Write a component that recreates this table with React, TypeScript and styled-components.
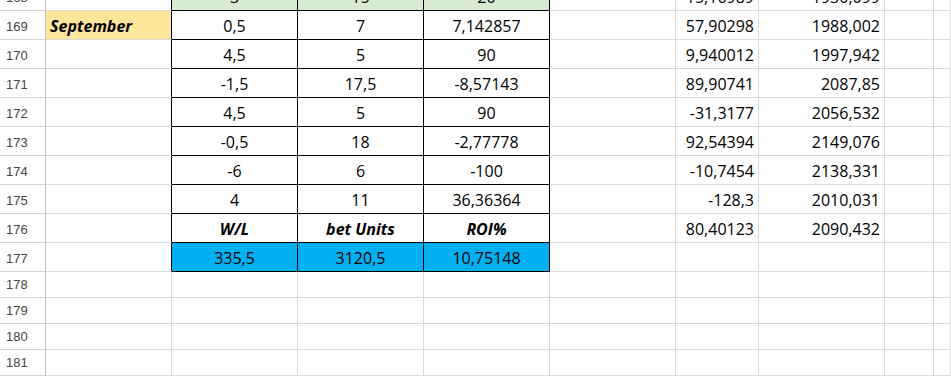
import { FunctionComponent } from 'react'
import styled, { createGlobalStyle } from 'styled-components'

const GlobalStyle = createGlobalStyle`
  html, body {
    margin: 0;
    padding: 0;
    background: #fff;
  }
`

const Viewport = styled.div`
  width: 951px;
  height: 376px;
  overflow: hidden;
  background: #fff;
`

// sheet is scrolled so that row 168 is mostly hidden above the top edge
const Sheet = styled.div`
  display: grid;
  grid-template-columns: 46px 126px 126px 126px 126px 126px 83px 126px 49px 1fr;
  grid-template-rows: repeat(10, 29px) repeat(5, 26px);
  margin-top: -18px;
`

const RowHead = styled.div`
  display: flex;
  align-items: flex-end;
  padding: 0 0 5px 6px;
  box-sizing: border-box;
  border-right: 1px solid #c6c6c6;
  border-bottom: 1px solid #d4d4d4;
  font-family: 'Liberation Sans', Arial, sans-serif;
  font-size: 13px;
  line-height: 14px;
  color: #444;
`

type Align = 'left' | 'center' | 'right'
type Fill = 'none' | 'green' | 'yellow' | 'blue'

const fills: Record<Fill, string> = {
  none: '#fff',
  green: '#d9ead3',
  yellow: '#fee59c',
  blue: '#00b0f0',
}

interface CellProps {
  $align: Align
  $fill: Fill
  $strong: boolean
  $right: boolean
  $bottom: boolean
}

const Cell = styled.div<CellProps>`
  display: flex;
  align-items: flex-end;
  justify-content: ${({ $align }) =>
    $align === 'left' ? 'flex-start' : $align === 'right' ? 'flex-end' : 'center'};
  padding: 0 4px 5px;
  box-sizing: border-box;
  overflow: hidden;
  white-space: nowrap;
  background: ${({ $fill }) => fills[$fill]};
  border-right: 1px solid ${({ $right }) => ($right ? '#000' : '#dadada')};
  border-bottom: 1px solid ${({ $bottom }) => ($bottom ? '#000' : '#dadada')};
  font-family: 'Open Sans', 'Liberation Sans', sans-serif;
  font-size: 16px;
  line-height: 16px;
  color: #000;
  font-weight: ${({ $strong }) => ($strong ? 700 : 400)};
  font-style: ${({ $strong }) => ($strong ? 'italic' : 'normal')};
`

interface CellData {
  text?: string
  align?: Align
  fill?: Fill
  strong?: boolean
}

interface RowData {
  num: number
  cells: Record<number, CellData>
}

const stat = (w: string, b: string, r: string, fill: Fill = 'none', strong = false) => ({
  1: { text: w, fill, strong },
  2: { text: b, fill, strong },
  3: { text: r, fill, strong },
})

const running = (g: string, h: string) => ({
  5: { text: g, align: 'right' as Align },
  6: { text: h, align: 'right' as Align },
})

const rows: RowData[] = [
  { num: 168, cells: { ...stat('3', '15', '20', 'green'), ...running('15,16989', '1930,099') } },
  {
    num: 169,
    cells: {
      0: { text: 'September', align: 'left', fill: 'yellow', strong: true },
      ...stat('0,5', '7', '7,142857'),
      ...running('57,90298', '1988,002'),
    },
  },
  { num: 170, cells: { ...stat('4,5', '5', '90'), ...running('9,940012', '1997,942') } },
  { num: 171, cells: { ...stat('-1,5', '17,5', '-8,57143'), ...running('89,90741', '2087,85') } },
  { num: 172, cells: { ...stat('4,5', '5', '90'), ...running('-31,3177', '2056,532') } },
  { num: 173, cells: { ...stat('-0,5', '18', '-2,77778'), ...running('92,54394', '2149,076') } },
  { num: 174, cells: { ...stat('-6', '6', '-100'), ...running('-10,7454', '2138,331') } },
  { num: 175, cells: { ...stat('4', '11', '36,36364'), ...running('-128,3', '2010,031') } },
  {
    num: 176,
    cells: { ...stat('W/L', 'bet Units', 'ROI%', 'none', true), ...running('80,40123', '2090,432') },
  },
  { num: 177, cells: stat('335,5', '3120,5', '10,75148', 'blue') },
  { num: 178, cells: {} },
  { num: 179, cells: {} },
  { num: 180, cells: {} },
  { num: 181, cells: {} },
  { num: 182, cells: {} },
]

const COLS = 9

const App: FunctionComponent = () => {
  return (
    <Viewport>
      <GlobalStyle />
      <Sheet>
        {rows.map(({ num, cells }) => {
          const inTable = num <= 177
          return [
            <RowHead key={`h${num}`}>{num}</RowHead>,
            ...Array.from({ length: COLS }, (_, col) => {
              const c = cells[col] || {}
              const tableCol = col >= 1 && col <= 3
              return (
                <Cell
                  key={`${num}-${col}`}
                  $align={c.align || 'center'}
                  $fill={c.fill || 'none'}
                  $strong={!!c.strong}
                  $right={inTable && col <= 3}
                  $bottom={inTable && tableCol}
                >
                  {c.text}
                </Cell>
              )
            }),
          ]
        })}
      </Sheet>
    </Viewport>
  )
}

export default App
